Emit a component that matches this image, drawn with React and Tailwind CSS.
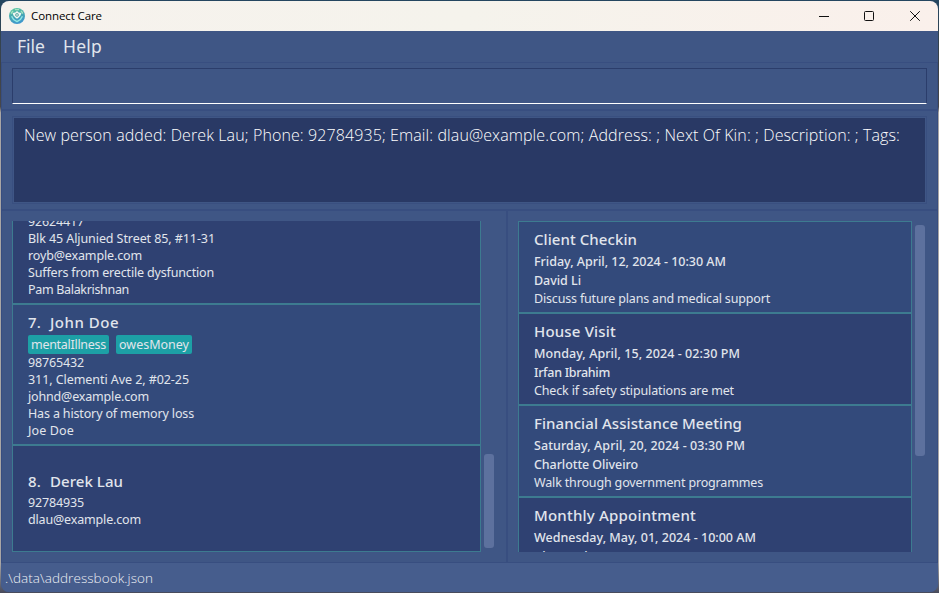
import { useLayoutEffect, useRef, useState } from 'react';

// Text run tracked so that it spans the given number of pixels.
function Fit({ w, className = '', children }) {
  const ref = useRef(null);
  const [spacing, setSpacing] = useState(0);
  useLayoutEffect(() => {
    const el = ref.current;
    el.style.letterSpacing = '0px';
    const natural = el.getBoundingClientRect().width;
    const next = (w - natural) / children.length;
    el.style.letterSpacing = `${next}px`;
    setSpacing(next);
  }, [w, children]);
  return (
    <span ref={ref} className={`inline-block whitespace-pre ${className}`} style={{ letterSpacing: spacing }}>
      {children}
    </span>
  );
}

const people = [
  {
    lines: [
      ['92624417', 56],
      ['Blk 45 Aljunied Street 85, #11-31', 187],
      ['royb@example.com', 114],
      ['Suffers from erectile dysfunction', 186],
      ['Pam Balakrishnan', 101],
    ],
    box: 'h-[83px] justify-end bg-[#2f4172] border-t-0 pb-[5px]',
  },
  {
    index: '7.',
    name: ['John Doe', 69],
    tags: [['mentalIllness', 75], ['owesMoney', 70]],
    lines: [
      ['98765432', 56],
      ['311, Clementi Ave 2, #02-25', 161],
      ['johnd@example.com', 121],
      ['Has a history of memory loss', 166],
      ['Joe Doe', 46],
    ],
    box: 'h-[141px] pt-[5px] bg-[#334a7b]',
  },
  {
    index: '8.',
    name: ['Derek Lau', 73],
    lines: [['92784935', 56], ['dlau@example.com', 113]],
    box: 'h-[107px] pt-[23px] bg-[#2f4172]',
  },
];

const events = [
  { title: ['Client Checkin', 103], date: ['Friday, April, 12, 2024 - 10:30 AM', 192], who: ['David Li', 47], note: ['Discuss future plans and medical support', 236] },
  { title: ['House Visit', 82], date: ['Monday, April, 15, 2024 - 02:30 PM', 206], who: ['Irfan Ibrahim', 76], note: ['Check if safety stipulations are met', 200] },
  { title: ['Financial Assistance Meeting', 208], date: ['Saturday, April, 20, 2024 - 03:30 PM', 211], who: ['Charlotte Oliveiro', 104], note: ['Walk through government programmes', 229] },
  { title: ['Monthly Appointment', 162], date: ['Wednesday, May, 01, 2024 - 10:00 AM', 222], who: ['Alex Yeoh', 58] },
];

function PersonCard({ person }) {
  return (
    <div className={`flex shrink-0 flex-col border border-[#3d7b90] pl-[15px] ${person.box}`}>
      {person.name && (
        <div className="flex h-[25px] shrink-0 items-center text-[15px] font-medium leading-[25px]">
          <Fit w={13} className="mr-[9px]">{person.index}</Fit>
          <Fit w={person.name[1]}>{person.name[0]}</Fit>
        </div>
      )}
      {person.tags && (
        <div className="flex h-[19px] shrink-0 gap-[7px]">
          {person.tags.map(([t, w]) => (
            <span key={t} className="rounded-[2px] bg-[#1da0a6] px-[3px] leading-[19px]">
              <Fit w={w}>{t}</Fit>
            </span>
          ))}
        </div>
      )}
      {person.lines.map(([t, w]) => (
        <div key={t} className="h-[17px] shrink-0 leading-[17px]">
          <Fit w={w}>{t}</Fit>
        </div>
      ))}
    </div>
  );
}

function EventCard({ event, even }) {
  return (
    <div className={`flex h-[92px] shrink-0 flex-col border border-[#3d7b90] pl-[15px] pt-[5px] ${even ? 'bg-[#334a7b]' : 'bg-[#2f4172]'}`}>
      <div className="h-[25px] text-[15px] font-medium leading-[25px]"><Fit w={event.title[1]}>{event.title[0]}</Fit></div>
      <div className="h-[19px] font-medium leading-[19px]"><Fit w={event.date[1]}>{event.date[0]}</Fit></div>
      <div className="h-[19px] font-medium leading-[19px]"><Fit w={event.who[1]}>{event.who[0]}</Fit></div>
      {event.note && <div className="h-[17px] leading-[17px]"><Fit w={event.note[1]}>{event.note[0]}</Fit></div>}
    </div>
  );
}

function Logo() {
  return (
    <svg width="16" height="16" viewBox="0 0 16 16" className="mr-[6px] shrink-0">
      <defs>
        <linearGradient id="lg" x1="0" y1="0" x2="0.3" y2="1">
          <stop offset="0" stopColor="#62cfa0" />
          <stop offset="0.5" stopColor="#48a9ae" />
          <stop offset="1" stopColor="#3f98cc" />
        </linearGradient>
      </defs>
      <circle cx="8" cy="8" r="8" fill="url(#lg)" />
      <path d="M2 5.5 4 3M12 3l2 2.5M6 1.6h4" stroke="#a5e3c0" strokeWidth="1.3" />
      <path d="M2.6 8.2C4 12 6 12.5 8 13.6 10 12.5 12 12 13.4 8.2" fill="none" stroke="#8fe6e4" strokeWidth="1.4" />
      <path d="M8 3 9.7 4.5 12.4 5 11.5 7.6 9.7 9.4 8 10.8 6.3 9.4 4.5 7.6 3.6 5 6.3 4.5Z" fill="#f1f7f2" />
      <circle cx="8" cy="6.9" r="1.5" fill="none" stroke="#5aa5a4" strokeWidth="0.8" />
      <path d="M8 5.2v3.4M6.3 6.9h3.4" stroke="#79b9b4" strokeWidth="0.6" />
    </svg>
  );
}

export default function App() {
  return (
    <div className="h-[593px] w-[939px] overflow-hidden bg-[linear-gradient(180deg,#244660_0,#3b4248_10%,#47474b_18%,#a9a6a5_19%,#a9a6a5_95%,#474a5b_100%)] p-px font-['Noto_Sans','Open_Sans',sans-serif] text-[12.5px] text-[#e1e5ec]">
      <div className="flex h-[591px] w-[937px] flex-col overflow-hidden rounded-[8px] bg-[#3f5685]">
        <header className="flex h-[30px] shrink-0 items-center bg-gradient-to-r from-[#f6f2ed] via-[#f5f3ec] to-[#faf0eb] pl-[8px] text-[12px] text-black">
          <Logo />
          <Fit w={71} className="font-['Open_Sans','Noto_Sans',sans-serif] text-[11.5px]">Connect Care</Fit>
          <div className="ml-auto flex items-center pr-[17px]">
            <svg width="102" height="12" viewBox="0 0 102 12" fill="none" stroke="#111">
              <path d="M0 6.5h10" />
              <rect x="45.5" y="1.5" width="9" height="9" rx="1" />
              <path d="m91.2 1.2 9.6 9.6m0-9.6-9.6 9.6" />
            </svg>
          </div>
        </header>

        <nav className="flex h-[32px] shrink-0 items-center gap-[18px] border-b border-[#384e80] pl-[16px] text-[17.5px]">
          <Fit w={28}>File</Fit>
          <Fit w={39}>Help</Fit>
        </nav>

        <main className="flex h-[499px] shrink-0 flex-col border-x border-[#384e80]">
          <div className="h-[48px] shrink-0 border-b-2 border-[#384e80] px-[10px] pt-[5px]">
            <div className="h-[36px] border border-[#2b3d6b] border-b-white" />
          </div>

          <div className="h-[100px] shrink-0 border-b-2 border-[#384e80] px-[10px] pt-[5px]">
            <div className="h-[88px] border border-[#394f80] p-px">
              <div className="h-[84px] bg-[#293965] pl-[10px] pt-[5px] text-[16px] font-light leading-[24px] text-white">
                <Fit w={876} className="font-['Open_Sans','Noto_Sans',sans-serif]">New person added: Derek Lau; Phone: 92784935; Email: dlau@example.com; Address: ; Next Of Kin: ; Description: ; Tags:</Fit>
              </div>
            </div>
          </div>

          <div className="flex h-[351px] shrink-0">
            <section className="flex w-[504px] shrink-0 gap-[3px] pl-[10px] pt-[10px]">
              <div className="flex h-[331px] w-[469px] flex-col overflow-hidden">
                {people.map((p, i) => <PersonCard key={i} person={p} />)}
              </div>
              <div className="mt-[233px] h-[94px] w-[10px] rounded-[3px] bg-[#5d719e]" />
            </section>
            <div className="w-[2px] shrink-0 bg-[#384e80]" />
            <section className="flex flex-1 gap-[3px] pl-[10px] pt-[10px]">
              <div className="flex h-[331px] w-[394px] flex-col overflow-hidden">
                {events.map((e, i) => <EventCard key={i} event={e} even={i % 2 === 0} />)}
              </div>
              <div className="mt-[4px] h-[231px] w-[10px] rounded-[3px] bg-[#5d719e]" />
            </section>
          </div>
        </main>

        <footer className="h-[30px] shrink-0 border-t border-[#384e80] bg-[#465d8d] pl-[4px] text-[13.5px] font-light leading-[30px] text-[#edf0f5]">
          <Fit w={148} className="font-['Open_Sans','Noto_Sans',sans-serif]">{'.\\data\\addressbook.json'}</Fit>
        </footer>
      </div>
    </div>
  );
}
